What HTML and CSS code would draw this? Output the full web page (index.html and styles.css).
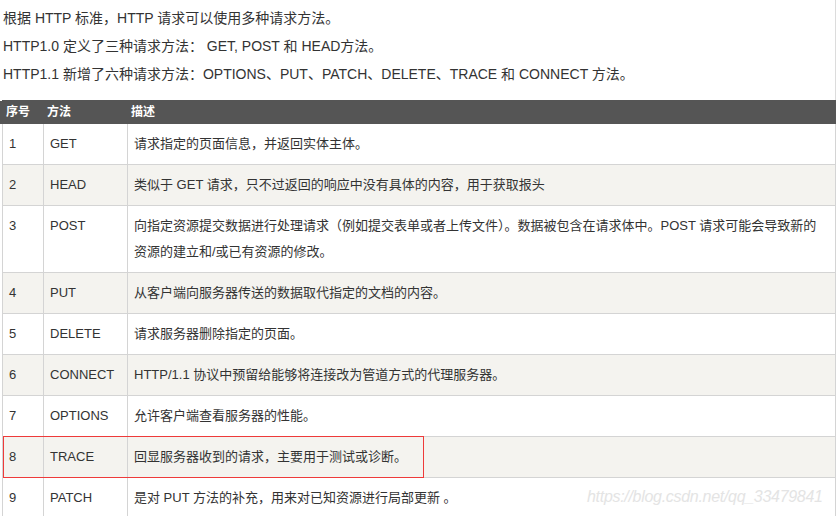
FILE: index.html
```html
<!DOCTYPE html>
<html lang="zh-CN">
<head>
    <meta charset="UTF-8">
    <meta name="viewport" content="width=device-width, initial-scale=1.0">
    <title>HTTP 请求方法</title>
    <link rel="stylesheet" href="styles.css">
</head>
<body>
    <div class="page">
        <p>根据 HTTP 标准，HTTP 请求可以使用多种请求方法。</p>
        <p>HTTP1.0 定义了三种请求方法： GET, POST 和 HEAD方法。</p>
        <p>HTTP1.1 新增了六种请求方法：OPTIONS、PUT、PATCH、DELETE、TRACE 和 CONNECT 方法。</p>

        <!-- Methods table -->
        <table class="reference">
            <colgroup>
                <col class="col-num">
                <col class="col-method">
                <col>
            </colgroup>
            <thead>
                <tr>
                    <th>序号</th>
                    <th>方法</th>
                    <th>描述</th>
                </tr>
            </thead>
            <tbody>
                <tr>
                    <td>1</td>
                    <td>GET</td>
                    <td>请求指定的页面信息，并返回实体主体。</td>
                </tr>
                <tr>
                    <td>2</td>
                    <td>HEAD</td>
                    <td>类似于 GET 请求，只不过返回的响应中没有具体的内容，用于获取报头</td>
                </tr>
                <tr>
                    <td>3</td>
                    <td>POST</td>
                    <td>向指定资源提交数据进行处理请求（例如提交表单或者上传文件）。数据被包含在请求体中。POST 请求可能会导致新的资源的建立和/或已有资源的修改。</td>
                </tr>
                <tr>
                    <td>4</td>
                    <td>PUT</td>
                    <td>从客户端向服务器传送的数据取代指定的文档的内容。</td>
                </tr>
                <tr>
                    <td>5</td>
                    <td>DELETE</td>
                    <td>请求服务器删除指定的页面。</td>
                </tr>
                <tr>
                    <td>6</td>
                    <td>CONNECT</td>
                    <td>HTTP/1.1 协议中预留给能够将连接改为管道方式的代理服务器。</td>
                </tr>
                <tr>
                    <td>7</td>
                    <td>OPTIONS</td>
                    <td>允许客户端查看服务器的性能。</td>
                </tr>
                <tr>
                    <td>8</td>
                    <td>TRACE</td>
                    <td>回显服务器收到的请求，主要用于测试或诊断。</td>
                </tr>
                <tr>
                    <td>9</td>
                    <td>PATCH</td>
                    <td>是对 PUT 方法的补充，用来对已知资源进行局部更新 。</td>
                </tr>
            </tbody>
        </table>

        <div class="mark"></div>
        <div class="watermark">https://blog.csdn.net/qq_33479841</div>
    </div>
</body>
</html>
```

FILE: styles.css
```css
body {
    margin: 0;
    background-color: #ffffff;
    color: #333333;
    font-family: "Liberation Sans", "Noto Sans CJK SC", sans-serif;
    font-size: 14px;
    overflow: hidden;
}
.page {
    position: relative;
    width: 836px;
    height: 516px;
    padding-top: 4px;
    box-sizing: border-box;
    border-right: 1px solid #dcdcdc;
}
p {
    margin: 0;
    padding-left: 3px;
    line-height: 28px;
}
/* Table Styles */
.reference {
    margin-top: 12px;
    margin-left: 2px;
    width: 834px;
    border-collapse: collapse;
    table-layout: fixed;
}
.col-num {
    width: 41px;
}
.col-method {
    width: 84px;
}
.reference th {
    background-color: #555555;
    color: #ffffff;
    border: 1px solid #555555;
    font-size: 12px;
    font-weight: bold;
    line-height: 16px;
    padding: 3px 3px;
    text-align: left;
    vertical-align: top;
}
.reference th:first-child {
    box-shadow: -3px 0 0 #555555;
}
.reference td {
    font-size: 13px;
    line-height: 26px;
    border: 1px solid #d4d4d4;
    padding: 7px 6px;
    vertical-align: top;
}
.reference tbody tr:nth-child(odd) {
    background-color: #ffffff;
}
.reference tbody tr:nth-child(even) {
    background-color: #f4f3ef;
}
.mark {
    position: absolute;
    left: 3px;
    top: 436px;
    width: 419px;
    height: 40px;
    border: 1px solid #ee3a3a;
}
.watermark {
    position: absolute;
    left: 587px;
    top: 488px;
    font-size: 16px;
    font-style: italic;
    color: #e4e4e4;
    letter-spacing: -0.3px;
}
```
